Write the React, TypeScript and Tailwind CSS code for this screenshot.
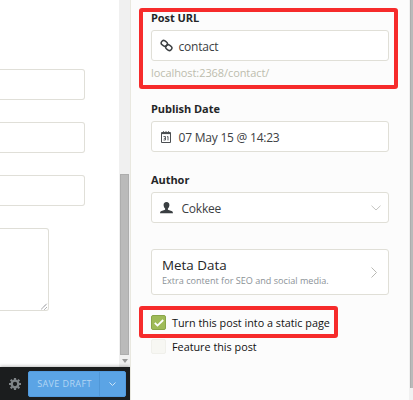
import type { ReactNode } from 'react';

function Label({ children }: { children: ReactNode }) {
  return <div className="h-4 whitespace-nowrap text-[11px] leading-4 font-bold tracking-[-.05px] text-[#242628]">{children}</div>;
}

function Field({ children }: { children: ReactNode }) {
  return (
    <div className="flex h-[31px] w-[238px] items-center rounded-[3px] border border-[#e0dfd7] bg-white pl-[8px] text-[12px] tracking-[-.22px] text-[#3c4043]">
      {children}
    </div>
  );
}

function LinkIcon() {
  return (
    <svg className="h-[13px] w-[13px] shrink-0" viewBox="0 0 13 13" fill="none" stroke="#3c4043" strokeWidth="1.5">
      <rect x="-3.2" y="-2.4" width="6.4" height="4.8" rx="2.4" transform="translate(4.3 4.4) rotate(35)" />
      <rect x="-3.2" y="-2.4" width="6.4" height="4.8" rx="2.4" transform="translate(8.8 8.6) rotate(35)" />
    </svg>
  );
}

function CalendarIcon() {
  return (
    <svg className="h-3 w-[13px] shrink-0" viewBox="-1 0 13 12" fill="none" stroke="#4b4f52">
      <path d="M.5 1.5h9v10h-9z" />
      <path d="M0 2.500h10" strokeWidth="1.2" />
      <path d="M2.500.3v2.500M5 .3v2.500M7.500.3v2.500" strokeWidth="1.1" />
      <path d="M2.500 5.500h2v3.500h-2M2.900 7.300h1.600M6 5.900l1-.4v3.900" strokeWidth=".9" />
    </svg>
  );
}

function UserIcon() {
  return (
    <svg className="h-3 w-[13px] shrink-0" viewBox="0 0 13 12" fill="#3a3f42">
      <path d="M6.5.1C4.500.1 3.500 1.400 3.600 3.200c.1 1.6.8 2.700 1.500 3.400v1.200L1.500 8.900C.5 9.300.1 10 0 11.300h13c-.1-1.300-.5-2-1.500-2.400L7.900 7.800V6.600c.7-.7 1.400-1.800 1.500-3.400C9.500 1.400 8.500.1 6.500.1z" />
    </svg>
  );
}

function GearIcon() {
  return (
    <svg className="h-3 w-3 shrink-0" viewBox="-6 -6 12 12">
      <circle r="3.3" fill="none" stroke="#808588" strokeWidth="2.3" />
      <g stroke="#808588" strokeWidth="2.2">
        <path d="M0-6v2M0 4v2M-6 0h2M4 0h2M-4.300-4.300l1.400 1.400M2.900 2.900l1.400 1.400M-4.300 4.300l1.400-1.400M2.900-2.900l1.400-1.400" />
      </g>
    </svg>
  );
}

function FormInput() {
  return <div className="mb-[22px] h-[31px] w-[85px] rounded-r-[3px] border border-l-0 border-[#e0dfd8] bg-white" />;
}

function EditorPane() {
  return (
    <div className="flex w-[130px] flex-col">
      <div className="flex h-[367px]">
        <div className="flex w-[119px] flex-col pt-[69px]">
          <FormInput />
          <FormInput />
          <FormInput />
          <div className="flex h-[83px] w-[49px] items-end justify-end rounded-r-[3px] border border-l-0 border-[#dfded7] bg-white">
            <svg className="h-[7px] w-[7px]" viewBox="0 0 7 7" stroke="#686a70" strokeWidth=".9" strokeDasharray="1.2 .5">
              <path d="M0 6.5L6 .5M3.5 6.5L6 4" />
            </svg>
          </div>
        </div>
        <div className="flex w-[11px] flex-col items-center bg-[#f0f0f0] pt-[174px]">
          <div className="h-[181px] w-[9px] border border-[#adadad] bg-[#bababa]" />
          <svg className="mt-1 h-1 w-[6px]" viewBox="0 0 6 4">
            <path d="M0 0h6L3 4z" fill="#999" />
          </svg>
        </div>
      </div>
      <div className="flex h-[33px] items-center bg-[#1b1d1e] pl-[8.5px] shadow-[0_-1px_3px_#00000040]">
        <GearIcon />
        <div className="ml-[7.5px] flex h-[26px] w-[98px] rounded-[2px] border border-[#519ade] bg-[#5ba4e5] text-[#b3d6f4]">
          <div className="flex w-[71px] items-center justify-center border-r border-[#5097d7] pl-px text-[9px] tracking-[.4px] whitespace-nowrap">SAVE DRAFT</div>
          <div className="flex flex-1 items-center justify-center">
            <svg className="h-1 w-[7px]" viewBox="0 0 7 4" fill="none" stroke="#cce4f7">
              <path d="M.5.5l3 3 3-3" />
            </svg>
          </div>
        </div>
      </div>
    </div>
  );
}

function SettingsPane() {
  return (
    <div className="flex flex-1 border-l border-[#e9e8e0] bg-[#fcfcfc]">
      <div className="relative flex w-[278px] flex-col pt-[10px] pl-5">
        <Label>Post URL</Label>
        <div className="mt-[4px]">
          <Field>
            <LinkIcon />
            <span className="ml-[5.5px] pt-0.5">contact</span>
          </Field>
        </div>
        <div className="mt-[4px] h-4 text-[11px] leading-4 tracking-[-.08px] text-[#bdbcae]">localhost:2368/contact/</div>
        <div className="mt-[20px]"><Label>Publish Date</Label></div>
        <div className="mt-1">
          <Field>
            <CalendarIcon />
            <span className="ml-[5.5px] pt-0.5">07 May 15 @ 14:23</span>
          </Field>
        </div>
        <div className="mt-5"><Label>Author</Label></div>
        <div className="mt-1">
          <Field>
            <UserIcon />
            <span className="ml-[8.5px] pt-0.5">Cokkee</span>
            <svg className="mr-[7px] ml-auto h-[6px] w-[10px]" viewBox="0 0 10 6" fill="none" stroke="#c5c5c2">
              <path d="M.5.7L5 5 9.500.7" />
            </svg>
          </Field>
        </div>
        <div className="mt-[26px] flex h-[46px] w-[238px] items-center justify-between rounded-[3px] border border-[#e0dfd7] bg-white pr-[11px] pl-[10px]">
          <div className="whitespace-nowrap">
            <div className="text-[13.4px] leading-[17px] text-[#242628]">Meta Data</div>
            <div className="text-[9.1px] leading-[14px] text-[#8b9297]">Extra content for SEO and social media.</div>
          </div>
          <svg className="h-[11px] w-[6px]" viewBox="0 0 6 11" fill="none" stroke="#b9b9b4">
            <path d="M.5.5l5 5-5 5" />
          </svg>
        </div>
        <div className="mt-5 flex h-[15px] items-center gap-[6px] text-[10.8px] text-[#111] whitespace-nowrap">
          <div className="flex h-[15px] w-[15px] items-center justify-center rounded-[2px] border border-[#89a549] bg-[#9fbb58]">
            <svg className="h-2 w-[10px]" viewBox="0 0 10 8" fill="none" stroke="white" strokeWidth="1.8">
              <path d="M.8 3.9l2.7 2.7L9.2 1" />
            </svg>
          </div>
          <span className="pt-0.5">Turn this post into a static page</span>
        </div>
        <div className="mt-[9px] flex h-[15px] items-center gap-[6px] text-[10.8px] text-[#111] whitespace-nowrap">
          <div className="h-[15px] w-[15px] rounded-[2px] border border-[#f0f0eb] bg-[#f7f7f3]" />
          <span className="pt-0.5">Feature this post</span>
        </div>
        <div className="absolute top-2 left-[7.500px] h-[81px] w-[259.500px] rounded-[3px] border-4 border-[#f62b2b]" />
        <div className="absolute top-[306px] left-[7.500px] h-[32px] w-[199.500px] rounded-[3px] border-4 border-[#f62b2b]" />
      </div>
      <div className="flex flex-1 flex-col bg-[#f1f1f1]">
        <div className="ml-px h-[388px] border-l border-[#adadad] bg-[#bababa]" />
      </div>
    </div>
  );
}

export default function App() {
  return (
    <div className="flex h-[400px] w-[413px] overflow-hidden bg-white font-['Open_Sans','Noto_Sans',sans-serif]">
      <EditorPane />
      <SettingsPane />
    </div>
  );
}
